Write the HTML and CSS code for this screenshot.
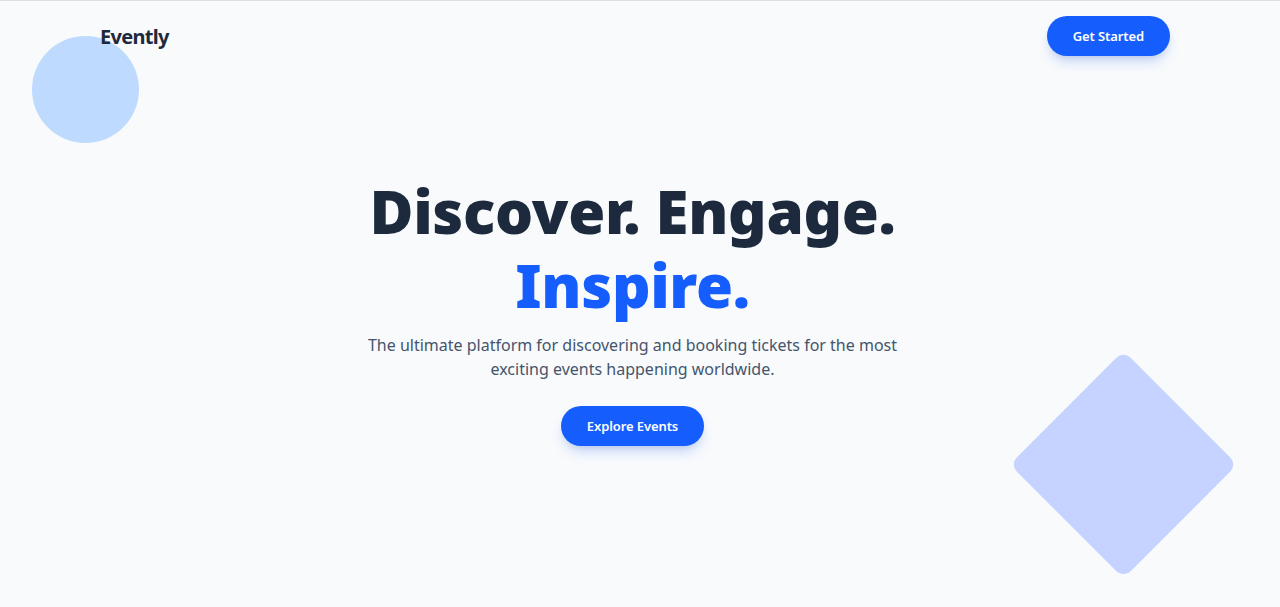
FILE: index.html
```html
<!DOCTYPE html>
<html lang="en">
<head>
<meta charset="utf-8">
<title>Evently</title>
<link rel="stylesheet" href="styles.css">
</head>
<body>
<div class="page">
  <div class="shape-circle"></div>
  <div class="shape-diamond"></div>
  <header class="nav">
    <div class="logo">Evently</div>
    <a class="btn" href="#">Get Started</a>
  </header>
  <section class="hero">
    <h1 class="title">Discover. Engage.<br><span class="accent">Inspire.</span></h1>
    <p class="lead">The ultimate platform for discovering and booking tickets for the most exciting events happening worldwide.</p>
    <a class="btn btn-explore" href="#">Explore Events</a>
  </section>
  <section class="below"></section>
</div>
</body>
</html>
```

FILE: styles.css
```css
* { box-sizing: border-box; }
html, body { margin: 0; padding: 0; }
body {
  background: #f8fafc;
  font-family: "Noto Sans", "Open Sans", sans-serif;
  color: #1d293d;
  border-top: 1px solid #dedede;
}
.page {
  position: relative;
  overflow: hidden;
  padding-right: 15px;
}
.shape-circle {
  position: absolute;
  left: 32px;
  top: 35px;
  width: 107px;
  height: 107px;
  border-radius: 50%;
  background: #bedbff;
}
.shape-diamond {
  position: absolute;
  left: 1043px;
  top: 383px;
  width: 161px;
  height: 161px;
  border-radius: 10px;
  background: #c6d2ff;
  transform: rotate(45deg);
}
.nav {
  position: relative;
  display: flex;
  justify-content: space-between;
  align-items: center;
  padding: 15px 95px 0 100px;
}
.logo {
  font-size: 20px;
  font-weight: 700;
  letter-spacing: -0.7px;
  color: #1d293d;
  margin-top: 1px;
}
.btn {
  display: inline-flex;
  align-items: center;
  justify-content: center;
  height: 40px;
  padding: 0 26px;
  border-radius: 9999px;
  background: #155dfc;
  color: #fff;
  font-size: 13px;
  font-weight: 600;
  letter-spacing: -0.1px;
  text-decoration: none;
  box-shadow: 0 8px 14px -4px rgba(21, 93, 252, 0.25), 0 4px 8px -4px rgba(0,0,0,0.12);
}
.hero {
  position: relative;
  display: flex;
  flex-direction: column;
  align-items: center;
  text-align: center;
  padding-top: 118px;
}
.title {
  margin: 0;
  font-size: 60px;
  font-weight: 900;
  line-height: 74px;
  letter-spacing: -0.3px;
  color: #1d293d;
}
.accent { color: #155dfc; }
.lead {
  max-width: 576px;
  margin: 11px 0 0;
  font-size: 16px;
  line-height: 24px;
  color: #45556c;
}
.btn-explore {
  margin-top: 25px;
}
.below {
  height: 1700px;
}
```
